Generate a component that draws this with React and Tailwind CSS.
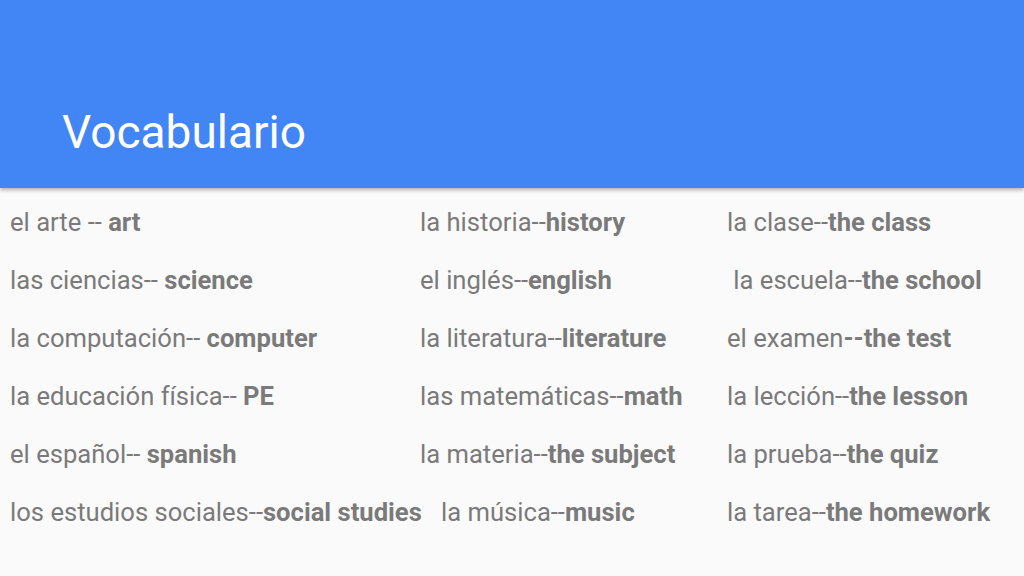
const rows = [
    [["el arte -- ", "art"], ["la historia--", "history"], ["la clase--", "the class"]],
    [["las ciencias-- ", "science"], ["el inglés--", "english"], [" la escuela--", "the school"]],
    [["la computación-- ", "computer"], ["la literatura--", "literature"], ["el examen", "--the test"]],
    [["la educación física-- ", "PE"], ["las matemáticas--", "math"], ["la lección--", "the lesson"]],
    [["el español-- ", "spanish"], ["la materia--", "the subject"], ["la prueba--", "the quiz"]],
    [["los estudios sociales--", "social studies"], ["la música--", "music"], ["la tarea--", "the homework"]],
]

const Entry = ({ word, className }) => (
    <div className={`whitespace-pre ${className}`}>
        {word[0]}<span className="font-bold">{word[1]}</span>
    </div>
)

const App = () => {
    return (
        <div className="w-[1024px] h-[576px] overflow-hidden bg-[#fafafa] font-['Roboto',sans-serif]">
            <div className="h-[188px] bg-[#4285f4] shadow-[0_2px_4px_rgba(0,0,0,0.3)] relative flex items-end pl-[62px] pb-[33px]">
                <h1 className="text-[46px] leading-none text-white">Vocabulario</h1>
            </div>
            <div className="pt-[5px] text-[25.6px] leading-[58px] text-[#7a7a7a]">
                {rows.map((r, i) => (
                    <div key={i} className="flex">
                        <Entry word={r[0]} className="w-[420px] shrink-0 pl-[10px]" />
                        <Entry word={r[1]} className={`w-[307px] shrink-0 ${i === 5 ? "pl-[21px]" : ""}`} />
                        <Entry word={r[2]} className="" />
                    </div>
                ))}
            </div>
        </div>
    )
}

export default App
